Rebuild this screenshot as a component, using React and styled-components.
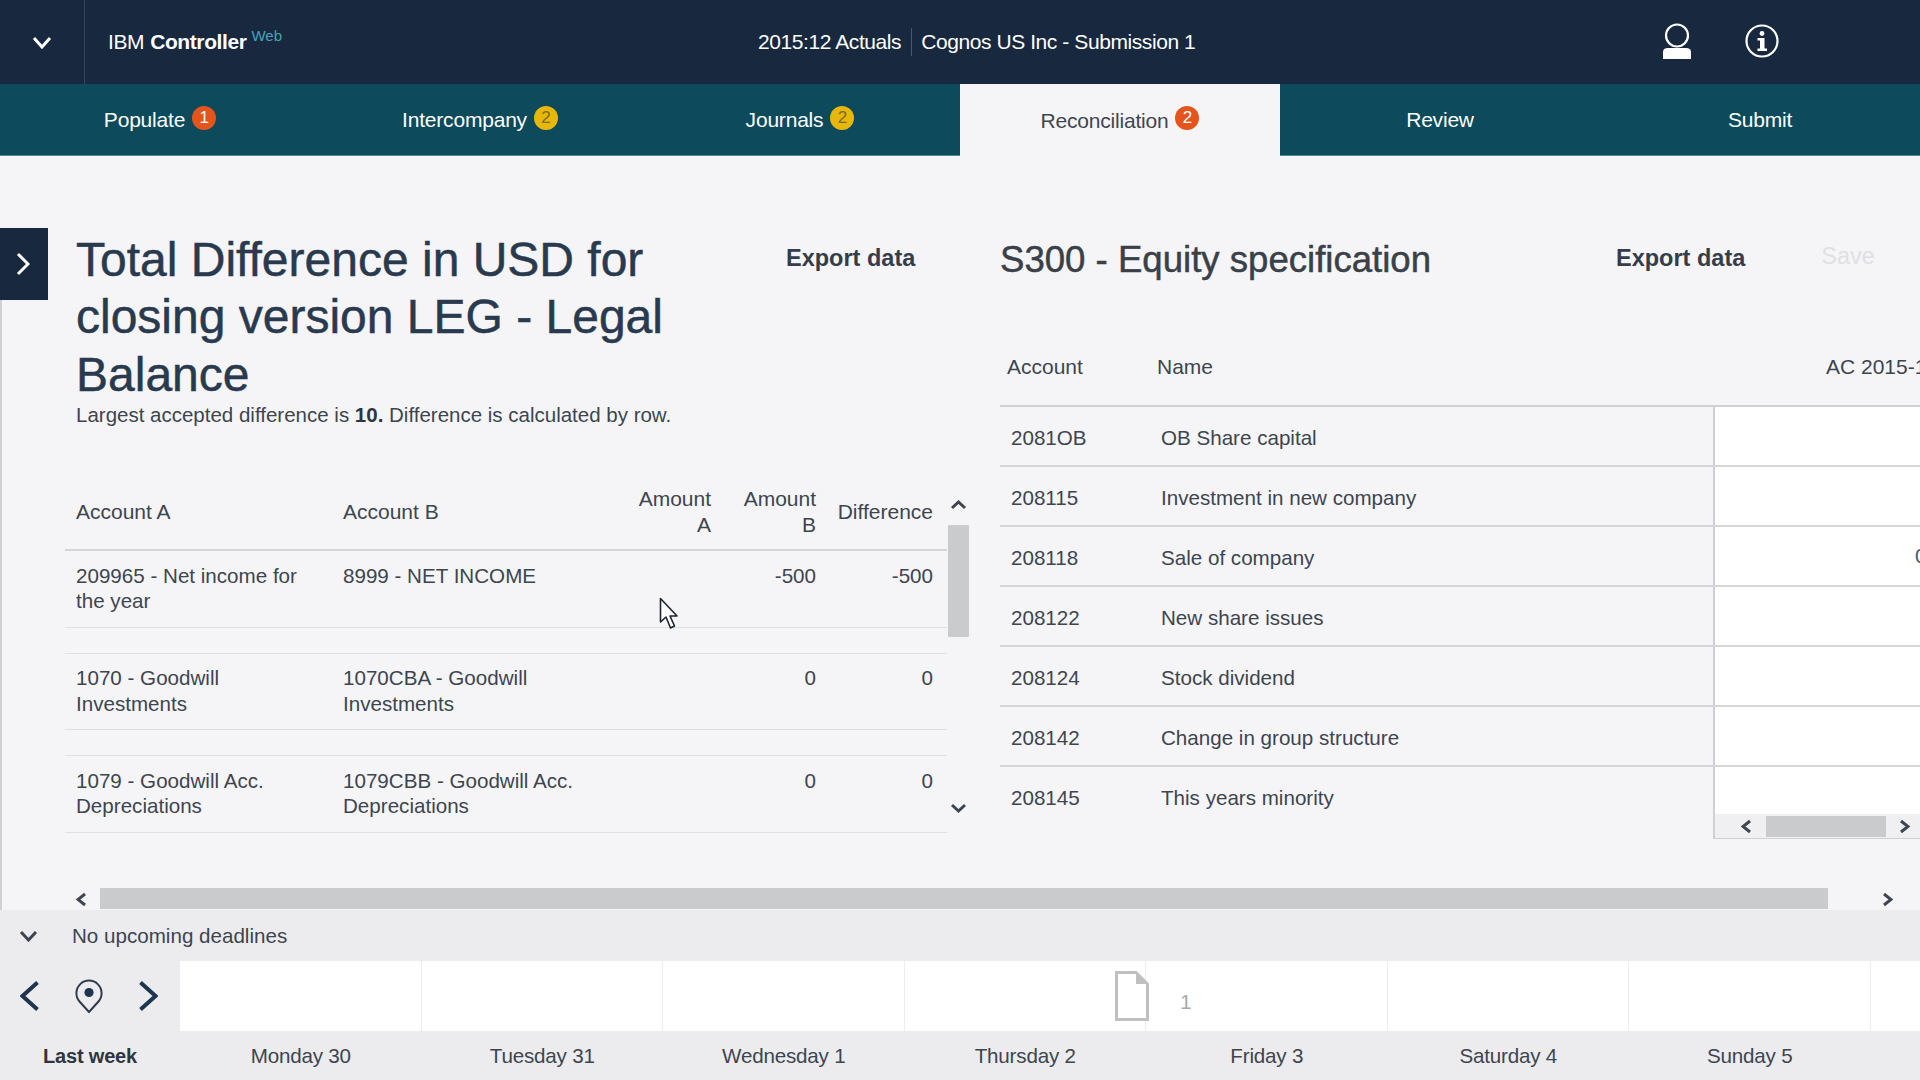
import React from "react";
import styled, { createGlobalStyle } from "styled-components";

const GlobalStyle = createGlobalStyle`
  html, body {
    margin: 0;
    padding: 0;
    overflow: hidden;
    background: #f5f5f7;
  }
  * {
    box-sizing: border-box;
  }
  body {
    font-family: "Liberation Sans", Arial, sans-serif;
    color: #3d4550;
  }
`;

const Page = styled.div`
  position: relative;
  width: 1920px;
  height: 1080px;
  display: flex;
  flex-direction: column;
  overflow: hidden;
`;

/* header */
const TopBar = styled.header`
  height: 84px;
  flex: none;
  display: flex;
  align-items: center;
  background: #17283f;
  color: #fff;
`;

const MenuBox = styled.div`
  width: 85px;
  height: 100%;
  display: flex;
  align-items: center;
  justify-content: center;
  border-right: 1px solid #35445a;
`;

const Brand = styled.div`
  width: 673px;
  padding-left: 23px;
  font-size: 21px;
  letter-spacing: -0.4px;
  display: flex;
  align-items: baseline;
  b {
    margin-left: 6px;
  }
  sup {
    margin: -2px 0 0 5px;
    font-size: 15px;
    letter-spacing: 0;
    color: #4aa3b8;
    line-height: 1;
    align-self: flex-start;
  }
`;

const Context = styled.div`
  width: 904px;
  display: flex;
  align-items: center;
  font-size: 21px;
  letter-spacing: -0.42px;
  span + span {
    margin-left: 10px;
    padding-left: 9px;
    border-left: 1px solid #4a586c;
    line-height: 28px;
  }
`;

const HeaderIcons = styled.div`
  display: flex;
  align-items: center;
  gap: 53px;
  margin-top: -2px;
`;

const TabBar = styled.nav`
  height: 72px;
  flex: none;
  display: grid;
  grid-template-columns: repeat(6, 1fr);
  background: #0c4a5c;
  border-bottom: 1px solid #4f8797;
`;

const Tab = styled.div`
  display: flex;
  align-items: center;
  justify-content: center;
  gap: 7px;
  padding-top: 1px;
  font-size: 21px;
  letter-spacing: -0.2px;
  color: ${(p) => (p.$active ? "#3e4650" : "#fff")};
  background: ${(p) => (p.$active ? "#f5f5f7" : "transparent")};
  margin-bottom: ${(p) => (p.$active ? "-1px" : "0")};
`;

const Badge = styled.span`
  width: 24px;
  height: 24px;
  margin-top: -5px;
  border-radius: 50%;
  display: flex;
  align-items: center;
  justify-content: center;
  font-size: 17px;
  letter-spacing: 0;
  background: ${(p) => (p.$warn ? "#e8b70c" : "#e5541b")};
  color: ${(p) => (p.$warn ? "#7c6a24" : "#fff")};
`;

/* main area */
const Main = styled.main`
  flex: 1;
  min-height: 0;
  display: flex;
`;

const Sidebar = styled.aside`
  width: 65px;
  flex: none;
  padding-top: 72px;
  display: flex;
  flex-direction: column;
`;

const ExpandButton = styled.div`
  width: 48px;
  height: 72px;
  flex: none;
  padding-right: 3px;
  background: #17283f;
  display: flex;
  align-items: center;
  justify-content: center;
`;

const SideRule = styled.div`
  flex: 1;
  width: 2px;
  background: #cfd0d3;
`;

const Content = styled.div`
  flex: 1;
  min-width: 0;
  display: flex;
  flex-direction: column;
`;

const Columns = styled.div`
  flex: 1;
  min-height: 0;
  display: flex;
  padding-top: 75px;
`;

const LeftPane = styled.section`
  width: 904px;
  flex: none;
  margin-right: 31px;
`;

const RightPane = styled.section`
  flex: 1;
  min-width: 0;
`;

const PaneHead = styled.div`
  display: flex;
  align-items: flex-start;
  padding-left: ${(p) => p.$inset || 0}px;
`;

const Title = styled.h1`
  margin: 0;
  width: ${(p) => p.$width}px;
  padding-right: ${(p) => p.$reserve || 0}px;
  flex: none;
  font-size: ${(p) => p.$size}px;
  font-weight: 400;
  line-height: 57.4px;
  color: ${(p) => p.$color};
  -webkit-text-stroke: 0.5px ${(p) => p.$color};
`;

const ActionLink = styled.a`
  font-size: 23.5px;
  font-weight: 700;
  line-height: 54px;
  white-space: nowrap;
  color: #343d49;
`;

const SaveLink = styled(ActionLink)`
  margin-left: 76px;
  font-weight: 400;
  line-height: 50px;
  color: #dfe0e3;
`;

const Note = styled.p`
  margin: -1px 0 0;
  padding-left: 11px;
  font-size: 20.5px;
  line-height: 26px;
  b {
    color: #2e3641;
  }
`;

/* left table */
const TableWrap = styled.div`
  margin-top: 44px;
  display: flex;
`;

const DiffTable = styled.div`
  width: 882px;
  flex: none;
  font-size: 20.6px;
  line-height: 25.6px;
`;

const diffColumns = "267px 300px 90px 105px 120px";

const DiffHead = styled.div`
  height: 79px;
  padding-top: 2px;
  display: grid;
  grid-template-columns: ${diffColumns};
  align-items: center;
  font-size: 21px;
  border-bottom: 2px solid #d5d6d9;
`;

const DiffRow = styled.div`
  height: 76.5px;
  padding-top: 11.5px;
  display: grid;
  grid-template-columns: ${diffColumns};
  align-items: start;
  border-bottom: 1px solid #dfe0e3;
`;

const RowSpacer = styled.div`
  height: 26px;
  border-bottom: 1px solid #dfe0e3;
`;

const DiffCell = styled.div`
  padding: 0 30px 0 11px;
`;

const NumCell = styled.div`
  padding: 0 ${(p) => p.$pad}px 0 ${(p) => p.$lead || 0}px;
  text-align: right;
`;

const VScroll = styled.div`
  width: 21px;
  margin-left: 1px;
  padding: 28px 0 20px;
  display: flex;
  flex-direction: column;
  align-items: center;
  justify-content: space-between;
`;

const VThumb = styled.div`
  width: 21px;
  height: 112px;
  margin: 15px 0 auto;
  background: #cacbcd;
  border-radius: 1px;
`;

/* right table */
const SpecTable = styled.div`
  margin-top: 41px;
  font-size: 20.6px;
  white-space: nowrap;
`;

const specColumns = "150px 563px 1fr";

const SpecHead = styled.div`
  height: 78px;
  display: grid;
  grid-template-columns: ${specColumns};
  align-items: center;
  font-size: 21px;
  border-bottom: 2px solid #cfd0d3;
  span {
    padding-left: 7px;
  }
  span:last-child {
    padding-left: 113px;
  }
`;

const SpecRow = styled.div`
  height: ${(p) => (p.$short ? 47 : 60)}px;
  display: grid;
  grid-template-columns: ${specColumns};
  border-bottom: ${(p) => (p.$short ? "none" : "2px solid #d5d6d9")};
`;

const SpecCell = styled.div`
  padding: ${(p) => (p.$short ? "14px 0 0 11px" : "3px 0 0 11px")};
  display: flex;
  align-items: center;
`;

const ValueCell = styled.div`
  background: #fff;
  border-left: 2px solid #cfd0d3;
  padding-left: 200px;
  display: flex;
  align-items: center;
  color: #4a5a6a;
  overflow: hidden;
`;

const MiniScroll = styled.div`
  margin-left: 713px;
  height: 25px;
  display: flex;
  align-items: center;
  padding-left: 26px;
  background: #f0f0f2;
  border-left: 2px solid #cfd0d3;
  border-bottom: 1px solid #cfd0d3;
`;

const HThumb = styled.div`
  flex: none;
  height: 21px;
  width: ${(p) => p.$width}px;
  margin: 0 ${(p) => p.$after}px 0 ${(p) => p.$before}px;
  background: #cacbcd;
`;

const PageScroll = styled.div`
  height: 22px;
  flex: none;
  padding-left: 11px;
  display: flex;
  align-items: flex-start;
  svg {
    margin-top: 4px;
  }
`;

/* deadlines */
const Footer = styled.footer`
  height: 170px;
  flex: none;
  background: #ececee;
  display: flex;
  flex-direction: column;
`;

const DeadlineRow = styled.div`
  height: 51px;
  display: flex;
  align-items: center;
  font-size: 20.6px;
  padding-left: 19px;
  gap: 34px;
`;

const weekColumns = "180px repeat(7, 241.5px) 1fr";

const WeekStrip = styled.div`
  height: 70px;
  display: grid;
  grid-template-columns: ${weekColumns};
`;

const WeekNav = styled.div`
  display: flex;
  align-items: center;
  justify-content: space-between;
  padding: 0 22px 0 20px;
`;

const DayCell = styled.div`
  background: #fff;
  border-right: 1px solid #ecedef;
  display: flex;
  justify-content: flex-end;
  padding-left: ${(p) => p.$inset || 0}px;
  &:last-child {
    border-right: none;
  }
`;

const DocIcon = styled.svg`
  align-self: center;
  flex: none;
  margin-right: -4px;
  position: relative;
`;

const DocCount = styled.span`
  margin-right: auto;
  padding-top: 28px;
  font-size: 21px;
  line-height: 26px;
  color: #a9aaac;
`;

const WeekLabels = styled.div`
  flex: 1;
  display: grid;
  grid-template-columns: ${weekColumns};
  align-items: center;
  padding-top: 1px;
`;

const DayLabel = styled.div`
  text-align: center;
  font-size: ${(p) => (p.$strong ? 20 : 20.6)}px;
  letter-spacing: -0.2px;
  font-weight: ${(p) => (p.$strong ? 700 : 400)};
  color: ${(p) => (p.$strong ? "#2e3641" : "#3d4550")};
`;

const Pointer = styled.svg`
  position: absolute;
  left: 659px;
  top: 597px;
`;

// chevron drawn in its own w x h box, pointing where dir says
const chevronPath = (dir, w, h, i) => {
  if (dir === "up") return `M${i} ${h - i} L${w / 2} ${i} L${w - i} ${h - i}`;
  if (dir === "down") return `M${i} ${i} L${w / 2} ${h - i} L${w - i} ${i}`;
  if (dir === "left") return `M${w - i} ${i} L${i} ${h / 2} L${w - i} ${h - i}`;
  return `M${i} ${i} L${w - i} ${h / 2} L${i} ${h - i}`;
};

const Chevron = ({ dir, w = 12, h = 12, color = "#3d4550", weight = 3 }) => (
  <svg width={w} height={h} style={{ flex: "none" }}>
    <path d={chevronPath(dir, w, h, weight / 2 + 0.5)} fill="none" stroke={color} strokeWidth={weight} />
  </svg>
);

const UserIcon = () => (
  <svg width="30" height="36" viewBox="0 0 30 36">
    <circle cx="15" cy="12.5" r="11" fill="none" stroke="#fff" strokeWidth="2.2" />
    <path d="M1 36 V29 Q1 25 6 25 H24 Q29 25 29 29 V36 Z" fill="#fff" />
  </svg>
);

const InfoIcon = () => (
  <svg width="34" height="34" viewBox="0 0 34 34">
    <circle cx="17" cy="17" r="15.5" fill="none" stroke="#fff" strokeWidth="2.2" />
    <circle cx="17" cy="9.5" r="2.4" fill="#fff" />
    <path d="M12.5 14 H19.5 V24.5 H22 V27 H12.5 V24.5 H15 V16.5 H12.5 Z" fill="#fff" />
  </svg>
);

const PinIcon = () => (
  <svg width="30" height="36" viewBox="0 0 30 36">
    <path
      d="M15 34 L5.5 23.5 A12.6 12.6 0 1 1 24.5 23.5 Z"
      fill="none"
      stroke="#2f3c4c"
      strokeWidth="2"
      strokeLinejoin="round"
    />
    <circle cx="15" cy="14.5" r="4.6" fill="#1e3550" />
  </svg>
);

const tabs = [
  { label: "Populate", badge: "1" },
  { label: "Intercompany", badge: "2", warn: true },
  { label: "Journals", badge: "2", warn: true },
  { label: "Reconciliation", badge: "2", active: true },
  { label: "Review" },
  { label: "Submit" },
];

const diffRows = [
  { a: "209965 - Net income for the year", b: "8999 - NET INCOME", amountB: "-500", diff: "-500" },
  { a: "1070 - Goodwill Investments", b: "1070CBA - Goodwill Investments", amountB: "0", diff: "0" },
  { a: "1079 - Goodwill Acc. Depreciations", b: "1079CBB - Goodwill Acc. Depreciations", amountB: "0", diff: "0" },
];

const specRows = [
  { id: "2081OB", name: "OB Share capital" },
  { id: "208115", name: "Investment in new company" },
  { id: "208118", name: "Sale of company", value: "0" },
  { id: "208122", name: "New share issues" },
  { id: "208124", name: "Stock dividend" },
  { id: "208142", name: "Change in group structure" },
];

const days = ["Monday 30", "Tuesday 31", "Wednesday 1", "Thursday 2", "Friday 3", "Saturday 4", "Sunday 5"];

const App = () => {
  return (
    <Page>
      <GlobalStyle />
      <TopBar>
        <MenuBox>
          <Chevron dir="down" w={20} h={13} color="#fff" weight={3} />
        </MenuBox>
        <Brand>
          IBM <b>Controller</b>
          <sup>Web</sup>
        </Brand>
        <Context>
          <span>2015:12 Actuals</span>
          <span>Cognos US Inc - Submission 1</span>
        </Context>
        <HeaderIcons>
          <UserIcon />
          <InfoIcon />
        </HeaderIcons>
      </TopBar>

      <TabBar>
        {tabs.map((t) => (
          <Tab key={t.label} $active={t.active}>
            {t.label}
            {t.badge && <Badge $warn={t.warn}>{t.badge}</Badge>}
          </Tab>
        ))}
      </TabBar>

      <Main>
        <Sidebar>
          <ExpandButton>
            <Chevron dir="right" w={14} h={24} color="#fff" weight={3} />
          </ExpandButton>
          <SideRule />
        </Sidebar>
        <Content>
          <Columns>
            <LeftPane>
              <PaneHead $inset={11}>
                <Title $width={710} $reserve={100} $size={48} $color="#2a3a4e">
                  Total Difference in USD for closing version LEG - Legal Balance
                </Title>
                <ActionLink>Export data</ActionLink>
              </PaneHead>
              <Note>
                Largest accepted difference is <b>10.</b> Difference is calculated by row.
              </Note>
              <TableWrap>
                <DiffTable>
                  <DiffHead>
                    <DiffCell>Account A</DiffCell>
                    <DiffCell>Account B</DiffCell>
                    <NumCell $pad={11}>Amount A</NumCell>
                    <NumCell $pad={11} $lead={14}>Amount B</NumCell>
                    <NumCell $pad={14}>Difference</NumCell>
                  </DiffHead>
                  {diffRows.map((r, i) => (
                    <React.Fragment key={r.a}>
                      <DiffRow>
                        <DiffCell>{r.a}</DiffCell>
                        <DiffCell>{r.b}</DiffCell>
                        <NumCell $pad={11}></NumCell>
                        <NumCell $pad={11}>{r.amountB}</NumCell>
                        <NumCell $pad={14}>{r.diff}</NumCell>
                      </DiffRow>
                      {i < diffRows.length - 1 && <RowSpacer />}
                    </React.Fragment>
                  ))}
                </DiffTable>
                <VScroll>
                  <Chevron dir="up" w={17} h={10} weight={3} />
                  <VThumb />
                  <Chevron dir="down" w={17} h={10} weight={3} />
                </VScroll>
              </TableWrap>
            </LeftPane>

            <RightPane>
              <PaneHead>
                <Title $width={616} $size={36.6} $color="#3a4048">S300 - Equity specification</Title>
                <ActionLink>Export data</ActionLink>
                <SaveLink>Save</SaveLink>
              </PaneHead>
              <SpecTable>
                <SpecHead>
                  <span>Account</span>
                  <span>Name</span>
                  <span>AC 2015-12</span>
                </SpecHead>
                {specRows.map((r) => (
                  <SpecRow key={r.id}>
                    <SpecCell>{r.id}</SpecCell>
                    <SpecCell>{r.name}</SpecCell>
                    <ValueCell>{r.value}</ValueCell>
                  </SpecRow>
                ))}
                <SpecRow $short>
                  <SpecCell $short>208145</SpecCell>
                  <SpecCell $short>This years minority</SpecCell>
                  <ValueCell />
                </SpecRow>
                <MiniScroll>
                  <Chevron dir="left" w={11} h={15} weight={3} />
                  <HThumb $width={120} $before={14} $after={13} />
                  <Chevron dir="right" w={11} h={15} weight={3} />
                </MiniScroll>
              </SpecTable>
            </RightPane>
          </Columns>
          <PageScroll>
            <Chevron dir="left" w={11} h={15} weight={3} />
            <HThumb $width={1728} $before={13} $after={54} />
            <Chevron dir="right" w={11} h={15} weight={3} />
          </PageScroll>
        </Content>
      </Main>

      <Footer>
        <DeadlineRow>
          <Chevron dir="down" w={19} h={12} weight={3} />
          No upcoming deadlines
        </DeadlineRow>
        <WeekStrip>
          <WeekNav>
            <Chevron dir="left" w={20} h={32} color="#1e3550" weight={4} />
            <PinIcon />
            <Chevron dir="right" w={20} h={32} color="#1e3550" weight={4} />
          </WeekNav>
          <DayCell />
          <DayCell />
          <DayCell />
          <DayCell>
            <DocIcon width="34" height="50" viewBox="0 0 34 50">
              <path d="M1.5 1.5 H21 L32.5 13 V48.5 H1.5 Z" fill="#fff" stroke="#bfc0c2" strokeWidth="3" />
              <path d="M21 1.5 L32.5 13 H21 Z" fill="#bfc0c2" />
            </DocIcon>
          </DayCell>
          <DayCell $inset={34}>
            <DocCount>1</DocCount>
          </DayCell>
          <DayCell />
          <DayCell />
          <DayCell />
        </WeekStrip>
        <WeekLabels>
          <DayLabel $strong>Last week</DayLabel>
          {days.map((d) => (
            <DayLabel key={d}>{d}</DayLabel>
          ))}
        </WeekLabels>
      </Footer>

      <Pointer width="22" height="34" viewBox="0 0 22 34">
        <path
          d="M1.5 1.5 V25 L7 20 L11.5 31 L15.5 29 L11 19 H18 Z"
          fill="#fff"
          stroke="#1d2530"
          strokeWidth="1.6"
          strokeLinejoin="round"
        />
      </Pointer>
    </Page>
  );
};

export default App;
